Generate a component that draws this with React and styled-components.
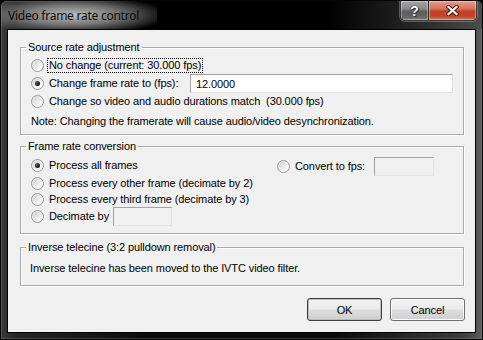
import React from "react";
import styled, { createGlobalStyle } from "styled-components";

const Global = createGlobalStyle`
  html, body { margin: 0; padding: 0; background: #000; }
  body { width: 483px; height: 340px; overflow: hidden; }
  * { box-sizing: border-box; }
`;

const UI_FONT = `"Liberation Sans", Arial, sans-serif`;

const Window = styled.div`
  width: 483px;
  height: 340px;
  display: flex;
  flex-direction: column;
  border: 1px solid #050505;
  border-radius: 6px 6px 1px 1px;
  box-shadow: inset 0 0 0 1px rgba(140, 140, 140, 0.35);
  background: linear-gradient(to right, #3a3a3a 0%, #242424 3%, #0c0c0c 30%, #0c0c0c 70%, #3c3c3c 96%, #5e5e5e 100%);
  overflow: hidden;
`;

const TitleBar = styled.div`
  height: 28px;
  flex: none;
  display: flex;
  align-items: flex-start;
  background: linear-gradient(to right, rgba(0,0,0,0) 0%, #000 28%, #000 68%, #2a2a2a 88%, #4c4c4c 100%);
`;

const Title = styled.div`
  height: 28px;
  padding: 7px 18px 0 7px;
  font-family: "Noto Sans", "Open Sans", sans-serif;
  font-size: 12px;
  line-height: 15px;
  letter-spacing: -0.25px;
  color: #0a0a0a;
  background: radial-gradient(ellipse 62% 70% at 46% 50%, rgba(200,200,200,0.95) 0%, rgba(160,160,160,0.7) 50%, rgba(60,60,60,0) 100%);
`;

const Spacer = styled.div`
  flex: 1;
`;

const CaptionGroup = styled.div`
  display: flex;
  margin-right: 5px;
  border: 1px solid #3a3a3a;
  border-top: none;
  border-radius: 0 0 5px 5px;
  overflow: hidden;
  box-shadow: 0 0 0 1px rgba(200, 200, 200, 0.35);
`;

const CaptionButton = styled.div`
  width: ${(p) => p.$w}px;
  height: 19px;
  display: flex;
  align-items: center;
  justify-content: center;
  background: ${(p) =>
    p.$close
      ? "linear-gradient(to bottom, #e29f8c 0%, #d27460 40%, #c33f22 55%, #c2452a 80%, #d8775a 100%)"
      : "linear-gradient(to bottom, #a5a5a5 0%, #8b8b8b 40%, #5e5e5e 55%, #636363 80%, #7c7c7c 100%)"};
  box-shadow: inset 0 0 0 1px rgba(255,255,255,0.35);
  & + & { border-left: 1px solid #2a2a2a; }
  font-family: "Liberation Sans", Arial, sans-serif;
  font-weight: bold;
  font-size: 14px;
  line-height: 14px;
  color: #fff;
  text-shadow: 0 0 1px #222, 0 0 1px #222, 1px 1px 0 #333;
`;

const Client = styled.div`
  margin: 0 6px;
  height: 304px;
  flex: none;
  border: 1px solid #000;
  background: #f0f0f0;
  display: flex;
  flex-direction: column;
  padding: 17px 10px 0 12px;
  font-family: ${UI_FONT};
  font-size: 11px;
  letter-spacing: -0.1px;
  color: #000;
`;

const Group = styled.div`
  position: relative;
  width: 444px;
  height: ${(p) => p.$h}px;
  margin-top: ${(p) => p.$mt || 0}px;
  border: 1px solid #a9a9a9;
  box-shadow: inset 1px 1px 0 #fff, 1px 1px 0 #fff;
  padding: ${(p) => p.$pad};
  flex: none;
`;

const Legend = styled.span`
  position: absolute;
  top: -7px;
  left: 5px;
  padding: 0 2px;
  line-height: 13px;
  background: #f0f0f0;
  white-space: nowrap;
`;

const Column = styled.div`
  display: flex;
  flex-direction: column;
`;

const Row = styled.div`
  display: flex;
  align-items: center;
  height: ${(p) => p.$h || 15}px;
  margin-top: ${(p) => p.$mt || 0}px;
  width: ${(p) => (p.$w ? `${p.$w}px` : "auto")};
  white-space: nowrap;
`;

const RadioCircle = styled.span`
  width: 13px;
  height: 13px;
  flex: none;
  border-radius: 50%;
  border: 1px solid #969696;
  background: linear-gradient(135deg, #c9c9c9 0%, #e6e6e6 45%, #fbfbfb 80%, #fff 100%);
  box-shadow: inset 0 0 0 1px rgba(255,255,255,0.6);
  display: flex;
  align-items: center;
  justify-content: center;
  &::after {
    content: "";
    display: ${(p) => (p.$checked ? "block" : "none")};
    width: 5px;
    height: 5px;
    border-radius: 50%;
    background: radial-gradient(circle at 35% 35%, #5a5a5a 0%, #141414 70%);
  }
`;

const Label = styled.span`
  margin-left: 3px;
  padding: 0 1px;
  line-height: 13px;
  border: 1px dotted ${(p) => (p.$focus ? "#000" : "transparent")};
`;

const TextBox = styled.input`
  width: ${(p) => p.$w}px;
  height: ${(p) => p.$h || 19}px;
  margin-left: auto;
  flex: none;
  padding: 0 5px;
  border: 1px solid;
  border-color: #a3a3a3 #e3e3e3 #e3e3e3 #a3a3a3;
  background: ${(p) => (p.disabled ? "#f0f0f0" : "#fff")};
  font-family: ${UI_FONT};
  font-size: 11px;
  letter-spacing: -0.1px;
  color: #000;
  outline: none;
`;

const Note = styled.div`
  margin-top: 5px;
  line-height: 15px;
  height: 15px;
  white-space: nowrap;
`;

const Split = styled.div`
  display: grid;
  grid-template-columns: 246px auto;
`;

const Plain = styled.div`
  line-height: 15px;
  white-space: nowrap;
`;

const ButtonRow = styled.div`
  display: flex;
  justify-content: flex-end;
  gap: 8px;
  margin-top: 12px;
`;

const Button = styled.div`
  width: 75px;
  height: 23px;
  display: flex;
  align-items: center;
  justify-content: center;
  border: 1px solid ${(p) => (p.$default ? "#3d3d3d" : "#707070")};
  border-radius: 3px;
  background: linear-gradient(to bottom, #f2f2f2 0%, #ebebeb 48%, #dddddd 52%, #cfcfcf 100%);
  box-shadow: inset 0 0 0 1px ${(p) => (p.$default ? "#bcbcbc" : "#fbfbfb")};
`;

const Radio = ({ checked, focus, children }) => (
  <>
    <RadioCircle $checked={checked} />
    <Label $focus={focus}>{children}</Label>
  </>
);

const CloseIcon = () => (
  <svg width="13" height="11" viewBox="0 0 13 11">
    <path d="M2.5 2 L10.5 9 M10.5 2 L2.5 9" stroke="#3b1a10" strokeWidth="4.2" strokeLinecap="square" />
    <path d="M2.5 2 L10.5 9 M10.5 2 L2.5 9" stroke="#fff" strokeWidth="2.2" strokeLinecap="square" />
  </svg>
);

export default function App() {
  return (
    <>
      <Global />
      <Window>
        <TitleBar>
          <Title>Video frame rate control</Title>
          <Spacer />
          <CaptionGroup>
            <CaptionButton $w={27}>?</CaptionButton>
            <CaptionButton $w={48} $close>
              <CloseIcon />
            </CaptionButton>
          </CaptionGroup>
        </TitleBar>
        <Client>
          <Group $h={88} $pad="10px 10px 0 10px">
            <Legend>Source rate adjustment</Legend>
            <Column>
              <Row>
                <Radio focus>No change (current: 30.000 fps)</Radio>
              </Row>
              <Row $h={19} $mt={1}>
                <Radio checked>Change frame rate to (fps):</Radio>
                <TextBox $w={263} defaultValue="12.0000" />
              </Row>
              <Row $mt={1}>
                <Radio>Change so video and audio durations match&nbsp;&nbsp;(30.000 fps)</Radio>
              </Row>
              <Note>Note: Changing the framerate will cause audio/video desynchronization.</Note>
            </Column>
          </Group>

          <Group $h={88} $mt={11} $pad="10px 10px 0 10px">
            <Legend>Frame rate conversion</Legend>
            <Split>
              <Column>
                <Row $mt={1}>
                  <Radio checked>Process all frames</Radio>
                </Row>
                <Row $mt={3}>
                  <Radio>Process every other frame (decimate by 2)</Radio>
                </Row>
                <Row $mt={1}>
                  <Radio>Process every third frame (decimate by 3)</Radio>
                </Row>
                <Row $h={19} $w={141}>
                  <Radio>Decimate by</Radio>
                  <TextBox $w={59} disabled defaultValue="" />
                </Row>
              </Column>
              <Column>
                <Row $h={19} $w={157}>
                  <Radio>Convert to fps:</Radio>
                  <TextBox $w={60} disabled defaultValue="" />
                </Row>
              </Column>
            </Split>
          </Group>

          <Group $h={39} $mt={13} $pad="13px 9px 0 9px">
            <Legend>Inverse telecine (3:2 pulldown removal)</Legend>
            <Plain>Inverse telecine has been moved to the IVTC video filter.</Plain>
          </Group>

          <ButtonRow>
            <Button $default>OK</Button>
            <Button>Cancel</Button>
          </ButtonRow>
        </Client>
      </Window>
    </>
  );
}
